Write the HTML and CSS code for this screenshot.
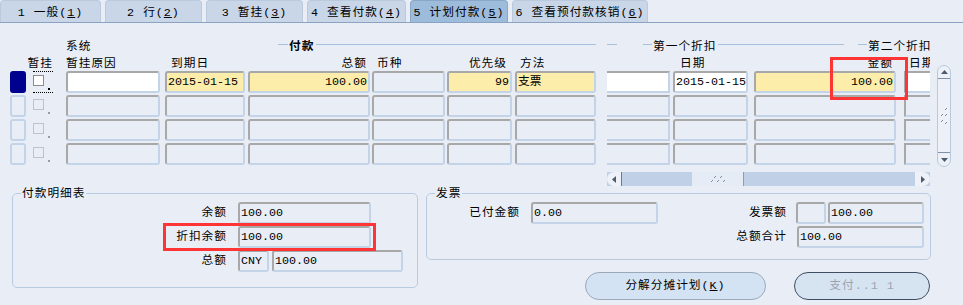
FILE: index.html
```html
<!DOCTYPE html>
<html lang="zh">
<head>
    <meta charset="UTF-8">
    <meta name="viewport" content="width=device-width, initial-scale=1.0">
    <link rel="stylesheet" href="styles.css">
    <title>计划付款</title>
</head>
<body>
    <div class="tabs">
        <div class="tab tab-1">1 一般(<u>1</u>)</div>
        <div class="tab tab-2">2 行(<u>2</u>)</div>
        <div class="tab tab-3">3 暂挂(<u>3</u>)</div>
        <div class="tab tab-4">4 查看付款(<u>4</u>)</div>
        <div class="tab tab-5 tab-active">5 计划付款(<u>5</u>)</div>
        <div class="tab tab-6">6 查看预付款核销(<u>6</u>)</div>
    </div>

    <div class="panel">
        <div class="table">
            <div class="grid">
                <div class="head1">
                    <div class="h-sys">系统</div>
                    <div class="group g-pay">
                        <div class="line lead"></div>
                        <b>付款</b>
                        <div class="line fill"></div>
                    </div>
                    <div class="line seg"></div>
                    <div class="group g-d1">
                        <div class="line lead"></div>
                        <span>第一个折扣</span>
                        <div class="line fill"></div>
                    </div>
                    <div class="group g-d2">
                        <div class="line lead"></div>
                        <span>第二个折扣</span>
                    </div>
                </div>

                <div class="head2">
                    <div class="c-sel"></div>
                    <div class="c-chk hr">暂挂</div>
                    <div class="c-reason">暂挂原因</div>
                    <div class="c-due pl6">到期日</div>
                    <div class="c-total hr pr3">总额</div>
                    <div class="c-cur pl5">币种</div>
                    <div class="c-pri hr pr5">优先级</div>
                    <div class="c-method pl5">方法</div>
                    <div class="c-d1a"></div>
                    <div class="c-d1date pl7">日期</div>
                    <div class="c-d1amt hr pr3">金额</div>
                    <div class="c-d2date pl5">日期</div>
                </div>

                <div class="row">
                    <div class="c-sel sel sel-current"></div>
                    <div class="c-chk chk chk-focus"><span class="chk-box"></span><span class="chk-dot"></span></div>
                    <div class="c-reason f f-white"></div>
                    <div class="c-due f f-yellow">2015-01-15</div>
                    <div class="c-total f f-yellow f-num">100.00</div>
                    <div class="c-cur f"></div>
                    <div class="c-pri f f-yellow f-num">99</div>
                    <div class="c-method f f-yellow">支票</div>
                    <div class="c-d1a f f-white cut-left"></div>
                    <div class="c-d1date f f-white">2015-01-15</div>
                    <div class="c-d1amt f f-yellow f-num">100.00</div>
                    <div class="c-d2date f f-white cut-right"></div>
                </div>
                <div class="row">
                    <div class="c-sel sel"></div>
                    <div class="c-chk chk chk-off"><span class="chk-box"></span><span class="chk-dot"></span></div>
                    <div class="c-reason f"></div>
                    <div class="c-due f"></div>
                    <div class="c-total f"></div>
                    <div class="c-cur f"></div>
                    <div class="c-pri f"></div>
                    <div class="c-method f"></div>
                    <div class="c-d1a f cut-left"></div>
                    <div class="c-d1date f"></div>
                    <div class="c-d1amt f"></div>
                    <div class="c-d2date f cut-right"></div>
                </div>
                <div class="row">
                    <div class="c-sel sel"></div>
                    <div class="c-chk chk chk-off"><span class="chk-box"></span><span class="chk-dot"></span></div>
                    <div class="c-reason f"></div>
                    <div class="c-due f"></div>
                    <div class="c-total f"></div>
                    <div class="c-cur f"></div>
                    <div class="c-pri f"></div>
                    <div class="c-method f"></div>
                    <div class="c-d1a f cut-left"></div>
                    <div class="c-d1date f"></div>
                    <div class="c-d1amt f"></div>
                    <div class="c-d2date f cut-right"></div>
                </div>
                <div class="row">
                    <div class="c-sel sel"></div>
                    <div class="c-chk chk chk-off"><span class="chk-box"></span><span class="chk-dot"></span></div>
                    <div class="c-reason f"></div>
                    <div class="c-due f"></div>
                    <div class="c-total f"></div>
                    <div class="c-cur f"></div>
                    <div class="c-pri f"></div>
                    <div class="c-method f"></div>
                    <div class="c-d1a f cut-left"></div>
                    <div class="c-d1date f"></div>
                    <div class="c-d1amt f"></div>
                    <div class="c-d2date f cut-right"></div>
                </div>

                <div class="hscroll">
                    <div class="hs-btn hs-left">
                        <svg width="4" height="7" viewBox="0 0 4 7"><path d="M0 3.5L4 0V7Z" fill="#4f5a6e"/></svg>
                    </div>
                    <div class="hs-thumb">
                        <svg width="16" height="8" viewBox="0 0 16 8"><path d="M4 3L6 1M10 3L12 1M1 7L3 5M7 7L9 5M13 7L15 5" stroke="#7d8ba2" stroke-width="1"/></svg>
                    </div>
                    <div class="hs-btn hs-right">
                        <svg width="4" height="7" viewBox="0 0 4 7"><path d="M4 3.5L0 0V7Z" fill="#4f5a6e"/></svg>
                    </div>
                </div>
            </div>

            <div class="vscroll">
                <div class="vs-up">
                    <svg width="7" height="4" viewBox="0 0 7 4"><path d="M3.5 0L7 4H0Z" fill="#4f5a6e"/></svg>
                </div>
                <div class="vs-mid">
                    <svg width="8" height="18" viewBox="0 0 8 18"><path d="M5 3L7 1M1 9L3 7M5 9L7 7M1 15L3 13M5 17L7 15" stroke="#7d8ba2" stroke-width="1"/></svg>
                </div>
                <div class="vs-down">
                    <svg width="7" height="4" viewBox="0 0 7 4"><path d="M3.5 4L7 0H0Z" fill="#4f5a6e"/></svg>
                </div>
            </div>
        </div>

        <div class="bottom">
            <fieldset class="box box-detail">
                <legend>付款明细表</legend>
                <div class="drow">
                    <div class="dlabel">余额</div>
                    <div class="f w133">100.00</div>
                </div>
                <div class="drow">
                    <div class="dlabel">折扣余额</div>
                    <div class="f w133">100.00</div>
                </div>
                <div class="drow">
                    <div class="dlabel">总额</div>
                    <div class="f w31">CNY</div>
                    <div class="f w131 ml3">100.00</div>
                </div>
            </fieldset>

            <div class="right">
                <fieldset class="box box-invoice">
                    <legend>发票</legend>
                    <div class="drow">
                        <div class="ilabel w93">已付金额</div>
                        <div class="f w127 ml11">0.00</div>
                        <div class="ilabel w129">发票额</div>
                        <div class="f w30 ml9"></div>
                        <div class="f w96 ml2">100.00</div>
                    </div>
                    <div class="drow">
                        <div class="ilabel w360">总额合计</div>
                        <div class="f w127 ml10">100.00</div>
                    </div>
                </fieldset>

                <div class="buttons">
                    <div class="btn btn-split">分解分摊计划(<u>K</u>)</div>
                    <div class="btn btn-pay">支付..1 1</div>
                </div>
            </div>
        </div>
    </div>

    <div class="mark mark-amount"></div>
    <div class="mark mark-disc"></div>
</body>
</html>
```

FILE: styles.css
```css
body {
    margin: 0;
    background-color: #e9eef6;
    font-family: "Liberation Mono", "Noto Sans CJK SC", monospace;
    font-size: 11.7px;
    color: #000000;
}

/* tabs */

.tabs {
    display: flex;
    gap: 4px;
    height: 22px;
}

.tab {
    box-sizing: border-box;
    height: 22px;
    padding-top: 4px;
    border: 1px solid #b9cade;
    border-bottom: none;
    border-radius: 4px 4px 0 0;
    background-color: #c8d6e8;
    text-align: center;
    line-height: 16px;
    letter-spacing: 1px;
    white-space: nowrap;
}

.tab-active {
    background-color: #9dbbdb;
    border-color: #8aa7c8;
}

.tab-1 { width: 101px; }
.tab-2 { width: 97px; }
.tab-3 { width: 97px; }
.tab-4 { width: 99px; }
.tab-5 { width: 98px; }
.tab-6 { width: 136px; }

.panel {
    border-top: 1px solid #8ba3c3;
}

/* multi row table */

.table {
    display: flex;
    padding-top: 13px;
}

.grid {
    display: flex;
    flex-direction: column;
    width: 930px;
    overflow: hidden;
}

.head1 {
    display: flex;
    align-items: center;
    height: 17px;
    letter-spacing: 1px;
    white-space: nowrap;
}

.h-sys {
    flex: none;
    width: 212px;
    margin-left: 66px;
}

.group {
    display: flex;
    align-items: center;
    flex: none;
}

.line {
    flex: none;
    height: 1px;
    background-color: #a9c1dd;
}

.group .fill {
    flex: 1;
    margin-left: 2px;
}

.g-pay { width: 318px; }
.g-pay .lead { width: 10px; margin-right: 1px; }

.seg {
    width: 10px;
    margin-left: 11px;
}

.g-d1 { width: 201px; margin-left: 26px; }
.g-d1 .lead { width: 9px; margin-right: 1px; }

.g-d2 { margin-left: 14px; }
.g-d2 .lead { width: 9px; margin-right: 1px; }

.head2 {
    display: flex;
    align-items: center;
    height: 18px;
    padding-left: 10px;
    letter-spacing: 1px;
    white-space: nowrap;
}

.head2 > div {
    display: flex;
    box-sizing: border-box;
}

.hr { justify-content: flex-end; }
.pl5 { padding-left: 5px; }
.pl6 { padding-left: 6px; }
.pl7 { padding-left: 7px; }
.pr3 { padding-right: 3px; }
.pr5 { padding-right: 5px; }

.row {
    display: flex;
    height: 22px;
    margin-bottom: 2px;
    padding-left: 10px;
}

.c-sel { width: 16px; }
.c-chk { width: 20px; margin-left: 7px; }
.c-reason { width: 94px; margin-left: 13px; }
.c-due { width: 80px; margin-left: 5px; }
.c-total { width: 122px; margin-left: 3px; }
.c-cur { width: 73px; margin-left: 2px; }
.c-pri { width: 65px; margin-left: 2px; }
.c-method { width: 81px; margin-left: 3px; }
.c-d1a { width: 63px; margin-left: 11px; }
.c-d1date { width: 75px; margin-left: 3px; }
.c-d1amt { width: 142px; margin-left: 6px; }
.c-d2date { width: 26px; margin-left: 8px; }

.head2 > div,
.row > div {
    flex: none;
}

.sel {
    box-sizing: border-box;
    border: 2px solid #c3d3e8;
    border-radius: 3px;
}

.sel-current {
    background-color: #00008e;
    border-color: #00008e;
}

.chk {
    display: flex;
    align-items: flex-start;
    box-sizing: border-box;
    border-top: 1px solid transparent;
    border-bottom: 1px solid transparent;
}

.chk-focus {
    border-top: 1px dotted #000000;
    border-bottom: 1px dotted #000000;
}

.chk-box {
    width: 11px;
    height: 11px;
    margin-top: 3px;
    box-sizing: border-box;
    border: 1px solid #c2c2c2;
}

.chk-dot {
    width: 2px;
    height: 2px;
    margin-top: 16px;
    margin-left: 4px;
    background-color: #9c9c9c;
}

.chk-focus .chk-box {
    background-color: #ffffff;
    border-color: #8c8c8c;
}

.chk-focus .chk-dot {
    background-color: #000000;
}

/* fields */

.f {
    flex: none;
    box-sizing: border-box;
    height: 22px;
    padding: 0 1px;
    border: 2px solid;
    border-color: #a8a8a8 #c3d3e8 #c3d3e8 #a8a8a8;
    border-radius: 3px;
    background-color: #e9eef6;
    line-height: 18px;
    white-space: nowrap;
    overflow: hidden;
}

.f-white { background-color: #ffffff; }
.f-yellow { background-color: #fcedab; }
.f-num { text-align: right; }

.cut-left {
    border-left: none;
    border-radius: 0;
}

.cut-right {
    border-right: none;
    border-radius: 0;
}

/* scroll bars */

.hscroll {
    display: flex;
    width: 323px;
    height: 14px;
    margin-top: 5px;
    margin-left: 607px;
    background-color: #bfd0e7;
}

.hs-btn {
    display: flex;
    align-items: center;
    justify-content: center;
    width: 15px;
    box-sizing: border-box;
    background-color: #eef2f8;
}

.hs-left {
    border-radius: 7px 0 0 7px;
    border-right: 1px solid #6d7b92;
}

.hs-right {
    margin-left: auto;
    border-radius: 0 7px 7px 0;
}

.hs-thumb {
    display: flex;
    align-items: center;
    justify-content: center;
    width: 52px;
    margin-left: 70px;
    box-sizing: border-box;
    background-color: #e6ecf5;
    border-right: 1px solid #8e9bb0;
}

.vscroll {
    flex: none;
    display: flex;
    flex-direction: column;
    width: 14px;
    height: 102px;
    margin-top: 29px;
    margin-left: 7px;
    box-sizing: border-box;
    border: 1px solid #b9c9dd;
    border-radius: 7px;
    background-color: #edf1f7;
}

.vs-up,
.vs-mid,
.vs-down {
    display: flex;
    align-items: center;
    justify-content: center;
}

.vs-up {
    height: 12px;
    border-bottom: 1px solid #8090a8;
}

.vs-mid {
    flex: 1;
}

.vs-down {
    height: 13px;
    border-top: 1px solid #8090a8;
}

/* bottom panels */

.bottom {
    display: flex;
    align-items: flex-start;
}

.box {
    margin: 0;
    padding: 2px 0 0;
    box-sizing: border-box;
    border: 1px solid #b8cbe2;
    border-radius: 5px;
}

.box legend {
    margin-left: 8px;
    padding: 2px 1px 0;
    line-height: 12px;
    letter-spacing: 1px;
}

.box-detail {
    width: 406px;
    margin-left: 12px;
    padding-bottom: 15px;
}

.right {
    width: 505px;
    margin-left: 8px;
}

.box-invoice {
    padding-bottom: 11px;
}

.drow {
    display: flex;
    height: 22px;
}

.drow + .drow {
    margin-top: 2px;
}

.dlabel,
.ilabel {
    flex: none;
    line-height: 22px;
    text-align: right;
    letter-spacing: 1px;
}

.dlabel {
    width: 214px;
    margin-right: 11px;
}

.w30 { width: 30px; }
.w31 { width: 31px; }
.w93 { width: 93px; }
.w96 { width: 96px; }
.w127 { width: 127px; }
.w129 { width: 129px; }
.w131 { width: 131px; }
.w133 { width: 133px; }
.w360 { width: 360px; }
.ml2 { margin-left: 2px; }
.ml3 { margin-left: 3px; }
.ml9 { margin-left: 9px; }
.ml10 { margin-left: 10px; }
.ml11 { margin-left: 11px; }

.buttons {
    display: flex;
    margin-top: 12px;
}

.btn {
    box-sizing: border-box;
    height: 28px;
    border: 1px solid #9aa8ba;
    border-radius: 14px;
    background-color: #d3e3f4;
    text-align: center;
    line-height: 26px;
    letter-spacing: 1px;
    white-space: nowrap;
}

.btn-split {
    width: 181px;
    margin-left: 159px;
}

.btn-pay {
    width: 136px;
    margin-left: 28px;
    border-color: #3f4d62;
    background-color: #d6e3f1;
    color: #9aa4b4;
}

/* highlight marks drawn over the form */

.mark {
    position: absolute;
    box-sizing: border-box;
    border: 3px solid #ff3535;
}

.mark-amount {
    left: 830px;
    top: 57px;
    width: 78px;
    height: 43px;
}

.mark-disc {
    left: 163px;
    top: 223px;
    width: 213px;
    height: 28px;
}
```
